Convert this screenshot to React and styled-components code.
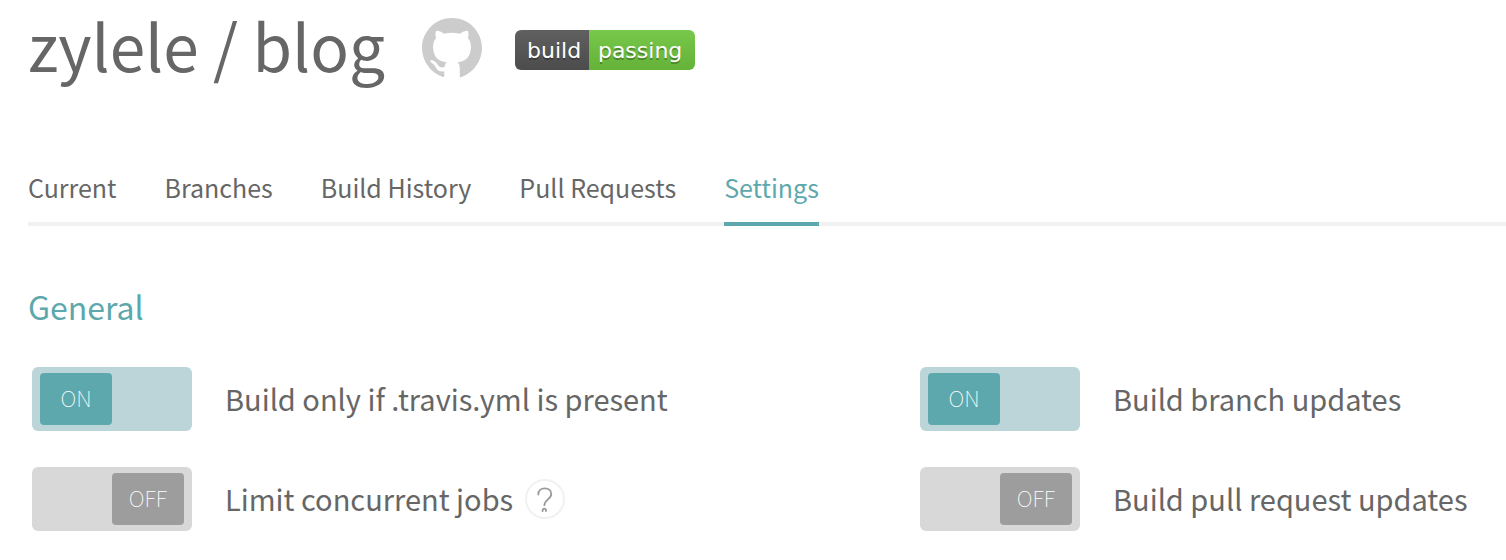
import React, { useState } from "react";
import styled, { createGlobalStyle } from "styled-components";

const teal = "#5da8ad";
const grey = "#666";

const GlobalStyle = createGlobalStyle`
  *, *::before, *::after { box-sizing: border-box; }
  body {
    margin: 0;
    background: #fff;
    color: ${grey};
    font-family: "Noto Sans CJK SC", "Noto Sans", sans-serif;
  }
`;

const Page = styled.main`
  padding: 0 0 24px 28px;
`;

const Header = styled.header`
  display: flex;
  align-items: center;
  height: 96px;
`;

const Title = styled.h1`
  margin: 0;
  padding-bottom: 8px;
  font-size: 64px;
  font-weight: 400;
  line-height: 88px;
  white-space: nowrap;
`;

const RepoLink = styled.a`
  margin: 0 33px 0 37px;
  height: 60px;
  color: #ccc;

  svg { display: block; overflow: visible; }
`;

const Badge = styled.a`
  display: flex;
  height: 40px;
  margin-top: 4px;
  border-radius: 6px;
  overflow: hidden;
  color: #fff;
  font-family: "DejaVu Sans", sans-serif;
  font-size: 22px;
  line-height: 42px;
  text-align: center;
  text-decoration: none;
  text-shadow: 0 2px 0 rgba(1, 1, 1, 0.3);
`;

const BadgePart = styled.span`
  width: ${(p) => (p.$status ? 106 : 74)}px;
  padding-${(p) => (p.$status ? "right" : "left")}: 4px;
  background: ${(p) =>
    p.$status
      ? "linear-gradient(#77c84c, #64b238)"
      : "linear-gradient(#606060, #4c4c4c)"};
`;

const Tabs = styled.nav`
  display: flex;
  gap: 48px;
  margin-top: 64px;
  box-shadow: inset 0 -4px #f1f1f1;
`;

const Tab = styled.a`
  padding-bottom: 8px;
  border-bottom: 4px solid ${(p) => (p.$active ? teal : "transparent")};
  color: ${(p) => (p.$active ? teal : grey)};
  font-size: 25px;
  line-height: 54px;
  text-decoration: none;
  white-space: nowrap;
`;

const SectionTitle = styled.h2`
  margin: 56px 0 37px;
  color: ${teal};
  font-size: 32px;
  font-weight: 400;
  line-height: 48px;
`;

const SettingsGrid = styled.div`
  display: grid;
  grid-template-columns: 3fr 2fr;
  gap: 36px 9px;
  padding-left: 4px;
`;

const Setting = styled.div`
  display: flex;
  align-items: center;
`;

const SwitchLabel = styled.label`
  position: relative;
  display: flex;
  align-items: center;
  gap: 33px;
  cursor: pointer;
`;

const LabelText = styled.span`
  padding-bottom: 2px;
  font-size: 29px;
  line-height: 60px;
  white-space: nowrap;
`;

const HiddenCheckbox = styled.input`
  position: absolute;
  width: 160px;
  height: 64px;
  margin: 0;
  opacity: 0;
`;

const Track = styled.span`
  display: flex;
  justify-content: ${(p) => (p.$on ? "flex-start" : "flex-end")};
  width: 160px;
  height: 64px;
  padding: 6px 8px;
  border-radius: 6px;
  background: ${(p) => (p.$on ? "#bcd5d9" : "#d8d8d8")};
`;

const Knob = styled.span`
  width: 72px;
  border-radius: 4px;
  background: ${(p) => (p.$on ? teal : "#9d9d9d")};
  color: #fff;
  font-size: 22px;
  font-weight: 100;
  line-height: 49px;
  text-align: center;
`;

const HelpButton = styled.button`
  display: grid;
  place-items: center;
  width: 40px;
  height: 40px;
  margin-left: 12px;
  padding: 0;
  border: 2px solid #f1f1f1;
  border-radius: 50%;
  background: #fff;
  color: #999;
`;

function GitHubMark() {
  return (
    <svg width="60" height="60" viewBox="0 0 60 60" fill="currentColor" aria-hidden="true">
      <path d="M30 0C13.400 0 0 13.400 0 30c0 13 8.300 24.300 20.300 28.800 1.300.5 2 .2 2-1.200v-4.400c-1.700.4-3.800.4-5.300-.2-2.200-.9-2.800-3.200-4.300-5.400-1.200-1.800-2.900-2.300-4.200-4.100-.5-.8-.1-1.200.8-1.200 2.600 0 4.200 1.500 5.500 3.200 1.300 1.900 2.300 3.400 4.400 3.800 1.200.2 2.400 0 3.400-.4.300-2 .8-3.600 2.200-4.600C15.500 43.400 11.100 38 11.100 28.700c0-3.700 1-6.400 3-8.700-.8-2.200-.8-4.800 0-7.300 2.600-.2 5.200 1.100 8 3 4.900-1.200 10.900-1.200 15.800 0 2.800-1.900 5.400-3.200 8-3 .8 2.500.8 5.100 0 7.300 2 2.300 3 5 3 8.700 0 9.300-4.400 14.700-13.400 15.600 1.600 1.300 2.300 3.400 2.300 6.100v7.900c0 1 .7 1.100 1.800.7C51.700 54.300 60 43 60 30 60 13.400 46.600 0 30 0Z" />
    </svg>
  );
}

function SwitchSetting({ label, initial, help }) {
  const [on, setOn] = useState(initial);
  return (
    <Setting>
      <SwitchLabel>
        <HiddenCheckbox type="checkbox" role="switch" checked={on} onChange={() => setOn(!on)} />
        <Track $on={on}>
          <Knob $on={on}>{on ? "ON" : "OFF"}</Knob>
        </Track>
        <LabelText>{label}</LabelText>
      </SwitchLabel>
      {help && (
        <HelpButton type="button" aria-label={`Help: ${label}`}>
          <svg width="20" height="28" viewBox="0 0 20 28" fill="none" stroke="currentColor" strokeWidth="1.8" strokeLinecap="round" aria-hidden="true">
            <path d="M3.300 9.500C3.300 5.400 6 3.300 9.800 3.300s6.500 2.400 6.500 5.700c0 5-6.900 5.800-6.900 11.200" />
            <path d="M7.600 26v-.6a1.700 1.700 0 0 1 3.400 0v.6" />
          </svg>
        </HelpButton>
      )}
    </Setting>
  );
}

const tabs = ["Current", "Branches", "Build History", "Pull Requests", "Settings"];

const settings = [
  { label: "Build only if .travis.yml is present", initial: true },
  { label: "Build branch updates", initial: true },
  { label: "Limit concurrent jobs", initial: false, help: true },
  { label: "Build pull request updates", initial: false },
];

export default function App() {
  return (
    <>
      <GlobalStyle />
      <Page>
        <Header>
          <Title>zylele / blog</Title>
          <RepoLink href="#github" aria-label="View on GitHub">
            <GitHubMark />
          </RepoLink>
          <Badge href="#status">
            <BadgePart>build</BadgePart>
            <BadgePart $status>passing</BadgePart>
          </Badge>
        </Header>
        <Tabs>
          {tabs.map((name) => (
            <Tab key={name} href="#" $active={name === "Settings"}>
              {name}
            </Tab>
          ))}
        </Tabs>
        <section>
          <SectionTitle>General</SectionTitle>
          <SettingsGrid>
            {settings.map((s) => (
              <SwitchSetting key={s.label} {...s} />
            ))}
          </SettingsGrid>
        </section>
      </Page>
    </>
  );
}
